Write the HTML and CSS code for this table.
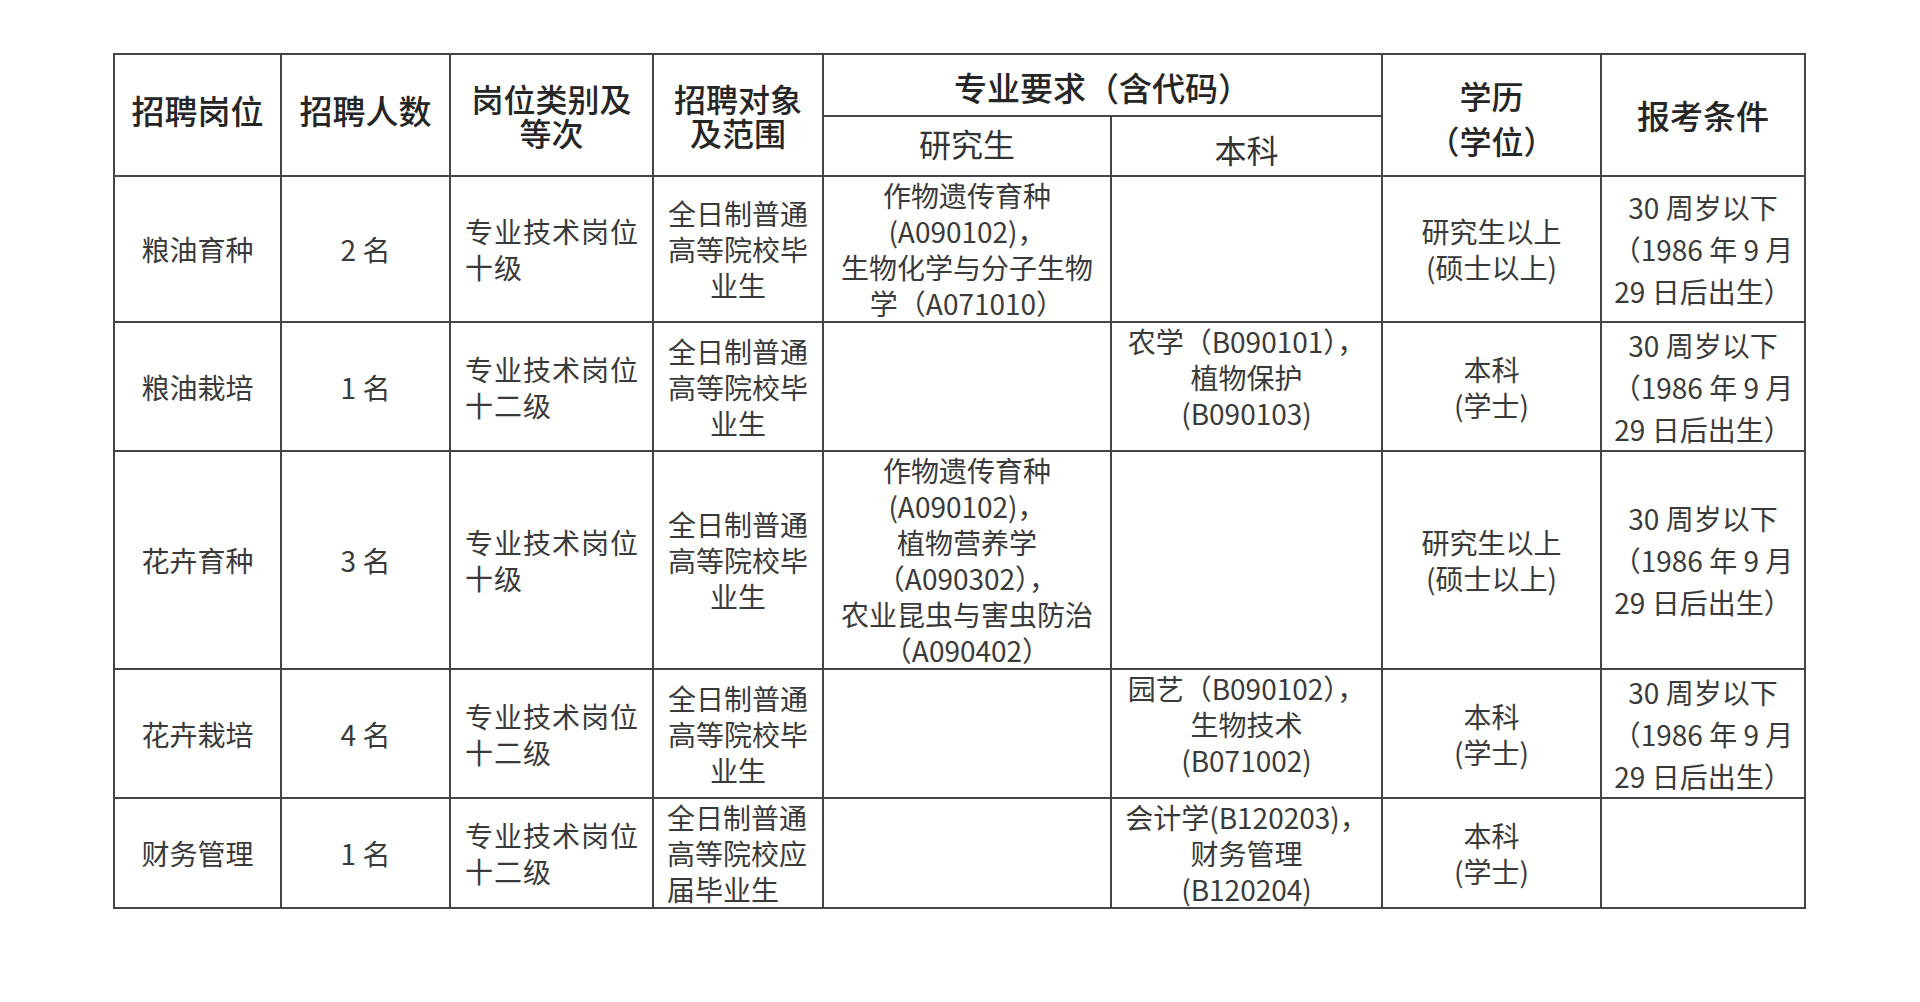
FILE: index.html
```html
<!DOCTYPE html>
<html lang="zh-CN">
<head>
<meta charset="utf-8">
<title>招聘岗位表</title>
<link rel="stylesheet" href="styles.css">
</head>
<body>
<div class="page">
<table class="jobs">
  <colgroup>
    <col class="c-post"><col class="c-num"><col class="c-type"><col class="c-target">
    <col class="c-grad"><col class="c-ug"><col class="c-edu"><col class="c-cond">
  </colgroup>
  <thead>
    <tr class="h1">
      <th rowspan="2" class="hi">招聘岗位</th>
      <th rowspan="2" class="hi">招聘人数</th>
      <th rowspan="2" class="th-tight">岗位类别及<br>等次</th>
      <th rowspan="2" class="th-tight">招聘对象<br>及范围</th>
      <th colspan="2" class="major">专业要求（含代码）</th>
      <th rowspan="2" class="th-loose">学历<br>（学位）</th>
      <th rowspan="2">报考条件</th>
    </tr>
    <tr class="h2">
      <th class="sub sub-high">研究生</th>
      <th class="sub sub-low">本科</th>
    </tr>
  </thead>
  <tbody>
    <tr class="r1">
      <td>粮油育种</td>
      <td>2 名</td>
      <td class="left">专业技术岗位<br>十级</td>
      <td>全日制普通<br>高等院校毕<br>业生</td>
      <td>作物遗传育种<br>(A090102)，<br>生物化学与分子生物<br>学（A071010）</td>
      <td></td>
      <td>研究生以上<br>(硕士以上)</td>
      <td class="cond">30 周岁以下<br>（1986 年 9 月<br>29 日后出生）</td>
    </tr>
    <tr class="r2">
      <td>粮油栽培</td>
      <td>1 名</td>
      <td class="left">专业技术岗位<br>十二级</td>
      <td>全日制普通<br>高等院校毕<br>业生</td>
      <td></td>
      <td class="up">农学（B090101），<br>植物保护<br>(B090103)</td>
      <td>本科<br>(学士)</td>
      <td class="cond">30 周岁以下<br>（1986 年 9 月<br>29 日后出生）</td>
    </tr>
    <tr class="r3">
      <td>花卉育种</td>
      <td>3 名</td>
      <td class="left">专业技术岗位<br>十级</td>
      <td>全日制普通<br>高等院校毕<br>业生</td>
      <td>作物遗传育种<br>(A090102)，<br>植物营养学<br>（A090302），<br>农业昆虫与害虫防治<br>（A090402）</td>
      <td></td>
      <td>研究生以上<br>(硕士以上)</td>
      <td class="cond">30 周岁以下<br>（1986 年 9 月<br>29 日后出生）</td>
    </tr>
    <tr class="r4">
      <td>花卉栽培</td>
      <td>4 名</td>
      <td class="left">专业技术岗位<br>十二级</td>
      <td>全日制普通<br>高等院校毕<br>业生</td>
      <td></td>
      <td class="up">园艺（B090102），<br>生物技术<br>(B071002)</td>
      <td>本科<br>(学士)</td>
      <td class="cond">30 周岁以下<br>（1986 年 9 月<br>29 日后出生）</td>
    </tr>
    <tr class="r5">
      <td>财务管理</td>
      <td>1 名</td>
      <td class="left">专业技术岗位<br>十二级</td>
      <td class="left-tight">全日制普通<br>高等院校应<br>届毕业生</td>
      <td></td>
      <td>会计学(B120203)，<br>财务管理<br>(B120204)</td>
      <td>本科<br>(学士)</td>
      <td></td>
    </tr>
  </tbody>
</table>
</div>
</body>
</html>
```

FILE: styles.css
```css
html, body {
  margin: 0;
  padding: 0;
  background: #ffffff;
}

.page {
  padding: 53px 0 0 113px;
  font-family: "Noto Sans CJK SC", "Noto Sans", sans-serif;
}

.jobs {
  border-collapse: collapse;
  table-layout: fixed;
  width: 1693px;
  color: #3a3a3a;
}

.c-post { width: 167px; }
.c-num { width: 169px; }
.c-type { width: 203px; }
.c-target { width: 170px; }
.c-grad { width: 288px; }
.c-ug { width: 271px; }
.c-edu { width: 219px; }
.c-cond { width: 204px; }

.jobs th,
.jobs td {
  border: 2px solid #444444;
  padding: 0 4px;
  text-align: center;
  vertical-align: middle;
  white-space: nowrap;
}

.jobs th {
  font-size: 33px;
  font-weight: 500;
  color: #262626;
  line-height: 38px;
}

.jobs th.hi {
  padding-bottom: 10px;
}

.jobs th.major {
  padding-top: 4px;
}

.jobs th.th-tight {
  line-height: 34px;
  font-size: 32px;
}

.jobs th.th-loose {
  line-height: 45px;
  font-size: 32px;
  padding-top: 6px;
}

.jobs th.sub {
  font-size: 32px;
  font-weight: 400;
  color: #333333;
}

.jobs th.sub-high {
  padding-bottom: 6px;
}

.jobs th.sub-low {
  padding-top: 6px;
}

.jobs td {
  font-size: 28px;
  line-height: 36px;
}

.jobs td.left {
  text-align: left;
  padding-left: 14px;
  letter-spacing: 1px;
}

.jobs td.left-tight {
  text-align: left;
  padding-left: 13px;
}

.jobs td.cond {
  line-height: 42px;
}

.jobs td.up {
  vertical-align: top;
  padding-top: 0;
  line-height: 36px;
}

.h1 { height: 62px; }
.h2 { height: 60px; }
.r1 { height: 146px; }
.r2 { height: 129px; }
.r3 { height: 217px; }
.r4 { height: 129px; }
.r5 { height: 109px; }
```
